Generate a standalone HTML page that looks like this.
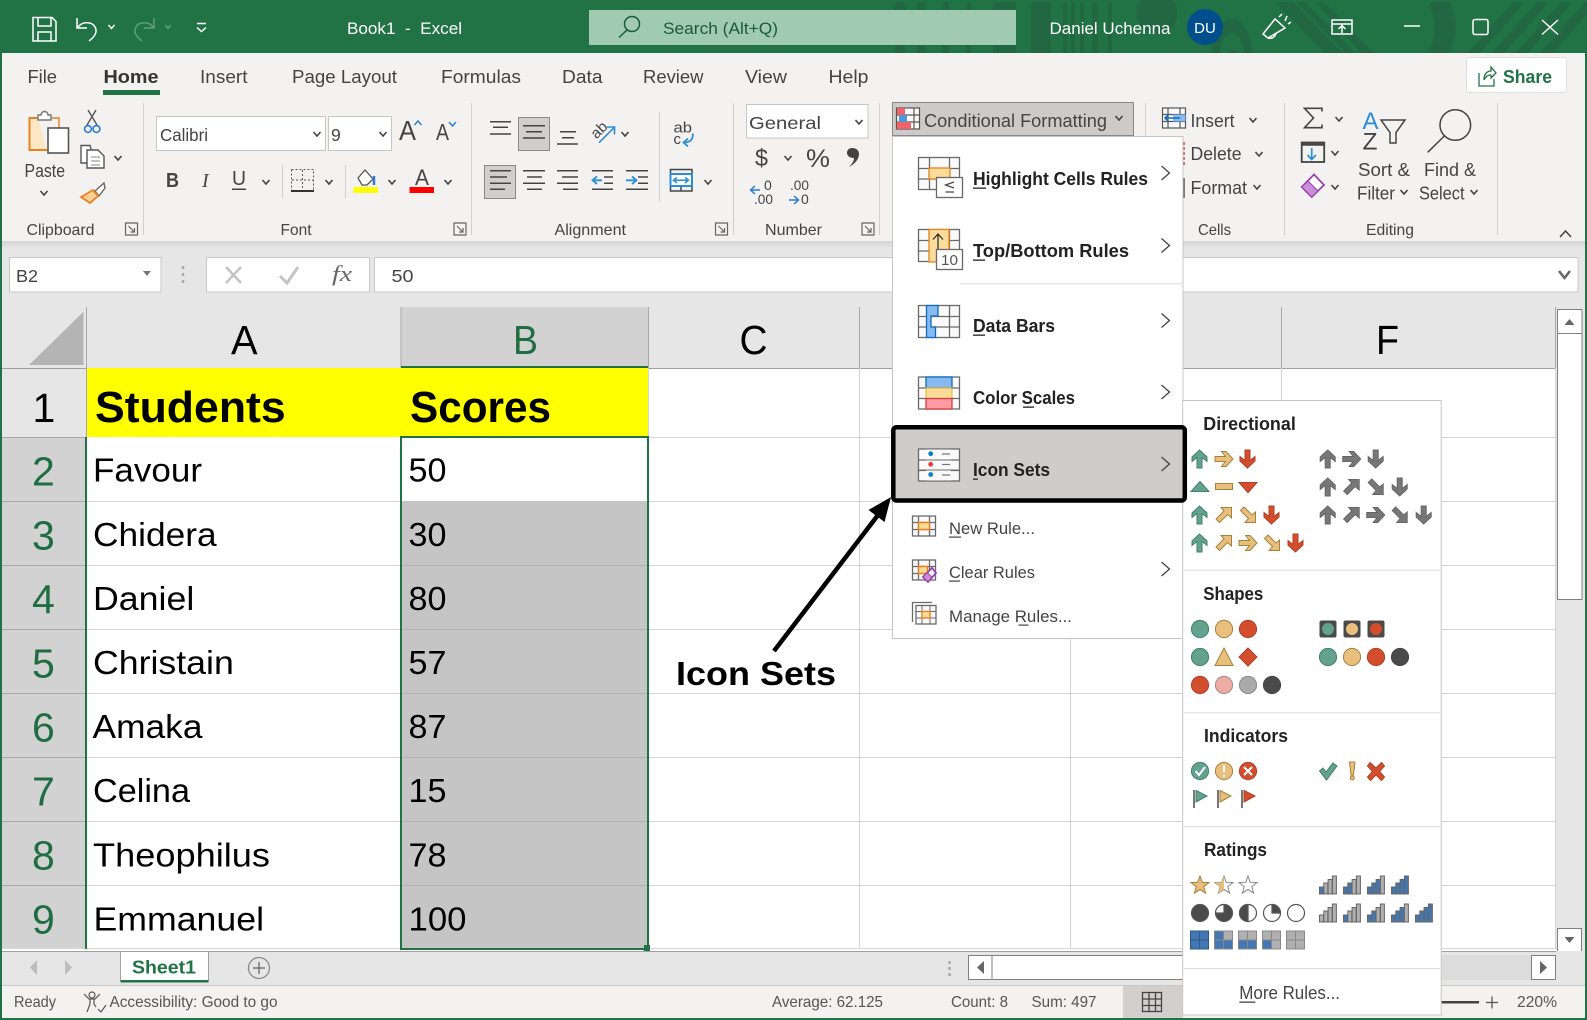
<!DOCTYPE html>
<html lang="en"><head><meta charset="utf-8"><title>Book1 - Excel</title>
<style>
html,body{margin:0;padding:0;background:#fff;width:1587px;height:1020px;overflow:hidden}
svg{display:block}
text{font-family:"Liberation Sans",sans-serif;fill:#444;font-size:18px}
.w{fill:#fff}
.g{font-size:16px}
.b{font-weight:700;fill:#222}
.c{font-size:33px;fill:#000}
.h{font-size:44px;font-weight:700;fill:#000}
.n{font-size:41px;fill:#1f6e43}
.k{font-size:41px;fill:#000}
.s{font-size:16px;fill:#555}
</style></head><body>
<svg xmlns="http://www.w3.org/2000/svg" width="1587" height="1020" viewBox="0 0 1587 1020">
<defs>
<linearGradient id="sh" x1="0" y1="0" x2="0" y2="1"><stop offset="0" stop-color="#d4d4d4"/><stop offset="1" stop-color="#e6e6e6"/></linearGradient>
<path id="ch" d="M-3.500-2 0 2 3.500-2" fill="none" stroke="#444" stroke-width="1.600"/>
<path id="mc" d="M-4-7 4 0-4 7" fill="none" stroke="#444" stroke-width="1.300"/>
<path id="launch" d="M-6-6H6V6H-6ZM-3-3 3 3M3-1V3H-1" fill="none" stroke="#666" stroke-width="1.200"/>
<path id="up" d="M0-9 7.500-2V2.500L2.500-1.500V9H-2.500V-1.500L-7.500 2.500V-2Z" stroke-width="1"/>
<path id="dg" d="M-3-7.500H7.500V3L3.500-.5-4.500 7.500-8 4 0-4Z" stroke-width="1"/>
<g id="gridM" fill="none" stroke="#6a6a6a" stroke-width="1.300"><rect x="0" y="0" width="41" height="32" fill="#fafafa"/><path d="M11 0V32M31 0V32M0 11H41M0 21.500H41"/></g>
<g id="gridS" fill="none" stroke="#6a6a6a" stroke-width="1.300"><rect x="0" y="0" width="23" height="20" fill="#fafafa"/><path d="M6 0V20M17 0V20M0 6.500H23M0 13.500H23"/></g>
<path id="star" d="M0-9.500 2.290-3.160 9.030-2.940 3.710 1.200 5.580 7.690 0 3.900-5.580 7.690-3.710 1.200-9.030-2.940-2.290-3.160Z"/>
</defs>

<rect width="1587" height="1020" fill="#fff"/>
<!-- title bar -->
<rect width="1587" height="53" fill="#217346"/>
<g fill="#206742">
<rect x="895" y="2" width="10" height="51"/><rect x="917" y="2" width="9" height="51"/><rect x="942" y="2" width="7" height="51"/><rect x="966" y="2" width="5" height="51"/><rect x="993" y="2" width="23" height="51"/>
<rect x="1031" y="2" width="20" height="51"/><rect x="1063" y="2" width="4" height="51"/><rect x="1071" y="2" width="4" height="51"/><rect x="1080" y="2" width="4" height="51"/><rect x="1092" y="2" width="6" height="51"/><rect x="1108" y="2" width="4" height="51"/>
<circle cx="1157" cy="13" r="20.500"/>
<path d="M1212 53a20 34 0 0 1 40 0h-8a12 20 0 0 0-24 0ZM1228 53a6 8 0 0 1 9 0Z"/>
<path d="M1275 2h18l50 51h-18ZM1296 2h9l50 51h-9ZM1315 2h9l50 51h-13ZM1429 2h20c9 15 9 35 0 51h-20c7-17 7-33 0-51ZM1468 53l45-51h12l-45 51ZM1492 53l45-51h12l-45 51ZM1516 53l45-51h12l-45 51ZM1540 53l45-51h2v12l-33 39Z"/>
</g>
<g fill="none" stroke="#fff" stroke-width="1.500">
<path d="M33 17.500H52L56 21.500V41H33ZM38 18V26H51V18M38 41V32H51V41"/>
<path d="M77 18V28H87M78 27C84 20 95 22 96 30 96.500 34 93 38 89 41"/>
<path d="M108.500 25 111.500 28.500 114.500 25"/>
<path d="M197 23.500H206M197 27.500 201.500 31.500 206 27.500"/>
<g stroke="#5f9e7f"><path d="M154 18V28H144M153 27C147 20 136 22 135 30 134.500 34 138 38 142 41"/><path d="M165 25 168 28.500 171 25"/></g>
</g>
<text class="w" x="347" y="34" style="font-size:17px" textLength="115" lengthAdjust="spacingAndGlyphs" xml:space="preserve">Book1  -  Excel</text>
<rect x="589" y="10" width="427" height="35" fill="#a0cbb1"/>
<g fill="none" stroke="#1c5a38" stroke-width="1.500"><circle cx="632" cy="24" r="7.500"/><path d="M627 30 619 37.500"/></g>
<text x="663" y="34" style="font-size:17px;fill:#1c5a38" textLength="115" lengthAdjust="spacingAndGlyphs">Search (Alt+Q)</text>
<text class="w" x="1049.500" y="34" style="font-size:17px" textLength="121" lengthAdjust="spacingAndGlyphs">Daniel Uchenna</text>
<ellipse cx="1205" cy="27" rx="18" ry="18" fill="#004e8c"/>
<text class="w" x="1205" y="33" text-anchor="middle" style="font-size:15px">DU</text>
<g fill="none" stroke="#fff" stroke-width="1.500">
<path d="M1263 34 1275 19 1285 28 1268 38ZM1268 38C1271 39 1275 38 1276 33M1279 17 1282 14M1285 21 1287 16M1288 24 1291 22"/>
<path d="M1332 20H1352V34H1332ZM1332 24H1352M1342 33V26M1338.500 29 1342 25.500 1345.500 29"/>
<path d="M1404 26H1420"/><rect x="1473" y="19.500" width="15" height="15" rx="2"/><path d="M1542 20 1558 34.500M1558 20 1542 34.500"/>
</g>

<!-- ribbon -->
<rect y="53" width="1587" height="188" fill="#f3f2f1"/>
<text x="27.500" y="83" textLength="29.500" lengthAdjust="spacingAndGlyphs">File</text>
<text x="103.500" y="83" textLength="55" lengthAdjust="spacingAndGlyphs" style="font-weight:700;fill:#333">Home</text>
<rect x="103" y="90" width="57" height="5" fill="#217346"/>
<text x="200" y="83" textLength="47.500" lengthAdjust="spacingAndGlyphs">Insert</text>
<text x="292" y="83" textLength="105" lengthAdjust="spacingAndGlyphs">Page Layout</text>
<text x="441" y="83" textLength="80" lengthAdjust="spacingAndGlyphs">Formulas</text>
<text x="562" y="83" textLength="40.500" lengthAdjust="spacingAndGlyphs">Data</text>
<text x="643" y="83" textLength="60.500" lengthAdjust="spacingAndGlyphs">Review</text>
<text x="745" y="83" textLength="42" lengthAdjust="spacingAndGlyphs">View</text>
<text x="828.500" y="83" textLength="40" lengthAdjust="spacingAndGlyphs">Help</text>
<rect x="1466.500" y="57.500" width="100" height="35" rx="3" fill="#fff" stroke="#e1dfdd"/>
<path d="M1479 73V86H1494V79M1484 80C1484 73 1488 71 1491 71V67L1496 73 1491 78V75C1488 75 1486 76 1484 80Z" fill="none" stroke="#217346" stroke-width="1.300"/>
<text x="1503" y="83" textLength="49" lengthAdjust="spacingAndGlyphs" style="font-weight:700;fill:#217346">Share</text>

<path d="M143.500 103V235M471.500 103V235M733.500 103V235M879.500 103V235M1145.500 103V235M1284.500 103V235M1497.500 103V235" stroke="#d2d0ce" stroke-width="1"/>

<!-- clipboard -->
<g fill="none" stroke-width="1.400">
<path d="M38 118H29.500V150H47" stroke="#e8821e" stroke-width="2" fill="#fce7c4"/>
<path d="M38 118H59V128" stroke="#e8821e"/>
<path d="M38 120V115H41A3.500 3.500 0 0 1 48 115H51V120Z" fill="#fff" stroke="#777"/>
<rect x="48" y="128" width="20.500" height="25" fill="#fff" stroke="#555" stroke-width="1.600"/>
<path d="M88 110 97 125M96 110 87 125" stroke="#555"/>
<circle cx="88" cy="129" r="3.400" stroke="#2b7cd3" stroke-width="1.600"/><circle cx="96.500" cy="129" r="3.400" stroke="#2b7cd3" stroke-width="1.600"/>
<path d="M81 145.500H90L91 149V163H81Z" stroke="#555" fill="#fff"/>
<path d="M87 150H98L104 156V168H87Z" stroke="#555" fill="#fff"/><path d="M91 157H100M91 161H100M91 165H100" stroke="#888" stroke-width="1"/>
<path d="M104 183 95 191 99 196 105 188Z" stroke="#666" fill="#fff"/>
<path d="M93 190 81 197 90 203 98 196Z" stroke="#e8821e" fill="#f9cf95" stroke-width="1.800"/>
</g>
<text x="24.500" y="177" textLength="40.500" lengthAdjust="spacingAndGlyphs">Paste</text>
<use href="#ch" x="44" y="193"/><use href="#ch" x="118" y="158"/>
<text class="g" x="26.500" y="235" textLength="68" lengthAdjust="spacingAndGlyphs">Clipboard</text>
<use href="#launch" x="131.500" y="229"/>

<!-- font -->
<rect x="156.500" y="116.500" width="169" height="34" fill="#fff" stroke="#c8c6c4"/>
<text x="160" y="141" style="font-size:17.500px" textLength="48" lengthAdjust="spacingAndGlyphs">Calibri</text>
<use href="#ch" x="317" y="134"/>
<rect x="328.500" y="116.500" width="63" height="34" fill="#fff" stroke="#c8c6c4"/>
<text x="331" y="141" style="font-size:17.500px">9</text><use href="#ch" x="383" y="134"/>
<text x="399" y="140" style="font-size:28px" textLength="17" lengthAdjust="spacingAndGlyphs">A</text>
<path d="M414.500 125 418 121 421.500 125" fill="none" stroke="#2b7cd3" stroke-width="1.400"/>
<text x="436" y="140" style="font-size:23px" textLength="13" lengthAdjust="spacingAndGlyphs">A</text>
<path d="M449 122 452.500 126 456 122" fill="none" stroke="#2b7cd3" stroke-width="1.400"/>
<text x="166" y="187" style="font-size:20px;font-weight:700" textLength="13" lengthAdjust="spacingAndGlyphs">B</text>
<text x="202" y="187" style="font-size:20px;font-style:italic;font-family:'Liberation Serif',serif">I</text>
<text x="232" y="185" style="font-size:20px" textLength="14" lengthAdjust="spacingAndGlyphs">U</text>
<rect x="232" y="188.500" width="14" height="1.500" fill="#444"/>
<use href="#ch" x="266" y="182"/>
<path d="M282.500 165V198M345.500 165V198" stroke="#d2d0ce"/>
<path d="M291.500 169.500H313.500V190M291.500 169.500V190M302.500 170V190M292 180H313" fill="none" stroke="#555" stroke-dasharray="2 2"/>
<rect x="291" y="190" width="23" height="2" fill="#333"/>
<use href="#ch" x="329" y="182"/>
<path d="M358 178 365 170 373 179 367 185 362 185Z" fill="#fff" stroke="#555" stroke-width="1.300"/>
<path d="M374 176V185" stroke="#2b7cd3" stroke-width="2.500"/>
<rect x="353.500" y="187" width="24.500" height="6" fill="#ff0"/>
<use href="#ch" x="392" y="182"/>
<text x="415" y="185" style="font-size:22px" textLength="14" lengthAdjust="spacingAndGlyphs">A</text>
<rect x="409.500" y="187" width="24.500" height="6" fill="#f00"/>
<use href="#ch" x="448" y="182"/>
<text class="g" x="280.500" y="235" textLength="31" lengthAdjust="spacingAndGlyphs">Font</text>
<use href="#launch" x="460" y="229"/>

<!-- alignment -->
<rect x="518.500" y="117.500" width="31" height="33" fill="#d0cfce" stroke="#8a8886"/>
<rect x="484.500" y="165.500" width="31" height="33" fill="#d0cfce" stroke="#8a8886"/>
<path d="M490 121.700H511M493 127.300H508M490 134H511M523 125.700H545M526 131.700H542M523 138H545M560 131.700H576M562 137.700H574M557 144H578" stroke="#444" stroke-width="1.500"/>
<path d="M490 170.700H511M490 177H507M490 183.300H511M490 189.300H505M523 170.700H545M527 177H542M523 183.300H545M527 189.300H542M557 170.700H578M562 177H578M557 183.300H578M563 189.300H578M592 170.700H613M604 177H613M604 183.300H613M592 189.300H613M626 170.700H648M638 177H648M638 183.300H648M626 189.300H648" stroke="#444" stroke-width="1.500"/>
<path d="M602 180.300H593M597 176.500 592.500 180.300 597 184M626 180.300H636M632 176.500 636.500 180.300 632 184" fill="none" stroke="#2b8fd8" stroke-width="1.800"/>
<text x="590.500" y="135" style="font-size:15px" transform="rotate(-45 599 130)" textLength="17" lengthAdjust="spacingAndGlyphs">ab</text>
<path d="M599 142.700 614 127.700M607 127H614.500V134.500" fill="none" stroke="#2b8fd8" stroke-width="1.600"/>
<use href="#ch" x="625" y="134"/>
<path d="M659.500 112V202" stroke="#d2d0ce"/>
<text x="673.500" y="132.300" style="font-size:15px" textLength="18.500" lengthAdjust="spacingAndGlyphs">ab</text>
<text x="673.500" y="144" style="font-size:15px">c</text>
<path d="M693 133.500C693 140 690 142.500 684 142.500M688 138.500 683.500 142.500 688 146.500" fill="none" stroke="#2b8fd8" stroke-width="1.800"/>
<g fill="none" stroke="#444" stroke-width="1.500"><path d="M670.500 174V169.500H692V174M670.500 186V191H692V186M681 186V191"/></g>
<rect x="670.500" y="174" width="21.500" height="12" fill="#fff" stroke="#2b8fd8" stroke-width="2"/>
<path d="M674 180.300H688M677 177.500 673.500 180.300 677 183M685 177.500 688.500 180.300 685 183" fill="none" stroke="#2b8fd8" stroke-width="1.500"/>
<use href="#ch" x="708" y="182"/>
<text class="g" x="554.500" y="235" textLength="71.500" lengthAdjust="spacingAndGlyphs">Alignment</text>
<use href="#launch" x="721.500" y="229"/>

<!-- number -->
<rect x="746.500" y="104.500" width="121.500" height="33.500" fill="#fff" stroke="#c8c6c4"/>
<text x="749" y="129" style="font-size:17.500px" textLength="72" lengthAdjust="spacingAndGlyphs">General</text>
<use href="#ch" x="859" y="122"/>
<text x="755" y="166" style="font-size:24px" textLength="13" lengthAdjust="spacingAndGlyphs">$</text>
<use href="#ch" x="788" y="158"/>
<text x="806" y="167" style="font-size:25px" textLength="24" lengthAdjust="spacingAndGlyphs">%</text>
<path d="M852 148C856 148 859 150 859 154 859 159 855 164 849 167 852 164 854 161 854 158 850 158 847 156 847 153 847 150 849 148 852 148Z" fill="#444"/>
<path d="M760 190H751M755 186 750.500 190 755 194" fill="none" stroke="#2b7cd3" stroke-width="1.500"/>
<text x="764" y="190" style="font-size:14px">0</text>
<text x="754" y="204" style="font-size:14px" textLength="19" lengthAdjust="spacingAndGlyphs">.00</text>
<text x="790" y="190" style="font-size:14px" textLength="19" lengthAdjust="spacingAndGlyphs">.00</text>
<path d="M789 200H798M794 196 798.500 200 794 204" fill="none" stroke="#2b7cd3" stroke-width="1.500"/>
<text x="801" y="204" style="font-size:14px">0</text>
<text class="g" x="765" y="235" textLength="57" lengthAdjust="spacingAndGlyphs">Number</text>
<use href="#launch" x="868" y="229"/>

<!-- conditional formatting btn -->
<rect x="892.500" y="102.500" width="241" height="33" fill="#cdcbc9" stroke="#8a8886"/>
<g fill="none" stroke="#555" stroke-width="1.200"><rect x="896.500" y="108" width="23" height="21" fill="#fafafa"/><path d="M902 108V129M914 108V129M896.500 115H919.500M896.500 122H919.500"/></g>
<rect x="897" y="108" width="8" height="7" fill="#f0616a"/><rect x="899" y="115" width="8" height="7" fill="#4b97d8"/><rect x="897" y="122" width="14" height="7" fill="#f0616a"/>
<text x="924" y="127" textLength="183" lengthAdjust="spacingAndGlyphs">Conditional Formatting</text>
<use href="#ch" x="1119" y="118"/>

<!-- cells -->
<g fill="none" stroke="#555" stroke-width="1.200"><rect x="1162.500" y="108" width="23" height="20" fill="#fafafa"/><path d="M1168 108V128M1180 108V128M1162.500 114.500H1185.500M1162.500 121.500H1185.500"/></g>
<rect x="1173" y="114.500" width="12.500" height="7" fill="#86baf0"/>
<path d="M1180 118H1165M1169 114 1165 118 1169 122" fill="none" stroke="#0f6cbd" stroke-width="1.500"/>
<text x="1190.500" y="127" textLength="44" lengthAdjust="spacingAndGlyphs">Insert</text><use href="#ch" x="1253" y="120"/>
<text x="1190.500" y="160" textLength="51" lengthAdjust="spacingAndGlyphs">Delete</text><use href="#ch" x="1259" y="154"/>
<text x="1190.500" y="194" textLength="56.500" lengthAdjust="spacingAndGlyphs">Format</text><use href="#ch" x="1257" y="187"/>
<path d="M1184 142V166" stroke="#e83b3b" stroke-dasharray="3 2" stroke-width="1.500"/>
<path d="M1184 178V198" stroke="#555" stroke-width="1.500"/>
<text class="g" x="1198" y="235" textLength="33" lengthAdjust="spacingAndGlyphs">Cells</text>

<!-- editing -->
<path d="M1322 111.500V108.300H1304.500L1313.500 118 1304.500 127.700H1322V124.500" fill="none" stroke="#444" stroke-width="1.600"/>
<use href="#ch" x="1339" y="119"/>
<rect x="1301.700" y="142.500" width="22.500" height="19.500" fill="none" stroke="#444" stroke-width="1.800"/><path d="M1301 144.500H1325" stroke="#444" stroke-width="2.500"/>
<path d="M1311.700 148V159M1307.500 155 1311.700 159.500 1316 155" fill="none" stroke="#2b8fd8" stroke-width="1.700"/>
<use href="#ch" x="1335" y="153"/>
<path d="M1314 174.500 1324 185 1311.700 197 1301.700 187Z" fill="#fff" stroke="#9a3dad" stroke-width="1.700"/><path d="M1308 181 1318 191 1311.700 197 1301.700 187Z" fill="#c98fd6" stroke="#9a3dad" stroke-width="1"/>
<use href="#ch" x="1335" y="187"/>
<text x="1362.500" y="129" style="font-size:24px;fill:#2b8fd8" textLength="16" lengthAdjust="spacingAndGlyphs">A</text>
<text x="1362.500" y="149.300" style="font-size:24px" textLength="15" lengthAdjust="spacingAndGlyphs">Z</text>
<path d="M1381 120H1405L1396 132.500V143H1390V132.500Z" fill="none" stroke="#444" stroke-width="1.500"/>
<circle cx="1455.300" cy="125" r="15.300" fill="none" stroke="#444" stroke-width="1.500"/><path d="M1444.300 136 1427.700 152.300" stroke="#444" stroke-width="1.500"/>
<text x="1358" y="176" textLength="52" lengthAdjust="spacingAndGlyphs">Sort &amp;</text>
<text x="1357" y="199.500" textLength="38" lengthAdjust="spacingAndGlyphs">Filter</text><use href="#ch" x="1404" y="192"/>
<text x="1424" y="176" textLength="52" lengthAdjust="spacingAndGlyphs">Find &amp;</text>
<text x="1419" y="199.500" textLength="45.500" lengthAdjust="spacingAndGlyphs">Select</text><use href="#ch" x="1474" y="192"/>
<text class="g" x="1366" y="235" textLength="48" lengthAdjust="spacingAndGlyphs">Editing</text>
<path d="M1560 237 1565.500 231 1571 237" fill="none" stroke="#444" stroke-width="1.500"/>

<!-- formula area -->
<rect y="241" width="1587" height="66" fill="#e6e6e6"/>
<rect y="241" width="1587" height="7" fill="url(#sh)"/>
<rect x="9.500" y="257.500" width="151.500" height="34.500" fill="#fff" stroke="#c8c8c8"/>
<text x="16" y="282" style="font-size:17.500px" textLength="22" lengthAdjust="spacingAndGlyphs">B2</text>
<path d="M143 271H151L147 276Z" fill="#777"/>
<path d="M183 266V269M183 273V276M183 280V283" stroke="#aaa" stroke-width="2.500"/>
<rect x="206.500" y="257.500" width="163" height="34.500" fill="#fff" stroke="#c8c8c8"/>
<path d="M226 267 241 283M241 267 226 283" stroke="#c4c4c4" stroke-width="2.500"/>
<path d="M280 276 287 283 298 267" fill="none" stroke="#c4c4c4" stroke-width="3"/>
<text x="332" y="281" style="font-size:22px;font-style:italic;font-family:'Liberation Serif',serif;fill:#666" textLength="20" lengthAdjust="spacingAndGlyphs">fx</text>
<rect x="374.500" y="257.500" width="1203.500" height="34.500" fill="#fff" stroke="#c8c8c8"/>
<text x="391.500" y="282" style="font-size:17.500px" textLength="22" lengthAdjust="spacingAndGlyphs">50</text>
<path d="M1559 271 1564.500 278 1570 271" fill="none" stroke="#666" stroke-width="2.500"/>

<!-- headers -->
<rect x="2" y="307" width="1555" height="61" fill="#e6e6e6"/>
<rect x="2" y="368" width="84" height="581" fill="#e6e6e6"/>
<rect x="2" y="437" width="84" height="512" fill="#d2d2d2"/>
<rect x="401" y="307" width="247" height="61" fill="#d2d2d2"/>
<path d="M29 365 83.500 311.700V365Z" fill="#b4b4b4"/>
<rect x="87" y="368" width="1470" height="581" fill="#fff"/>
<path d="M86.500 307V368M401 307V368M648.500 307V368M859.500 307V368M1070.500 307V368M1281.500 307V368M1555.500 307V368" stroke="#a8a8a8"/>
<path d="M2 368.500H1556" stroke="#9f9f9f"/>
<rect x="401" y="366" width="247" height="2" fill="#217346"/>
<path d="M2 437.500H86M2 501.500H86M2 565.500H86M2 629.500H86M2 693.500H86M2 757.500H86M2 821.500H86M2 885.500H86M86.500 368V437" stroke="#a8a8a8"/>
<text class="k" x="231" y="354" textLength="26.600" lengthAdjust="spacingAndGlyphs">A</text>
<text class="n" x="513" y="354" textLength="25" lengthAdjust="spacingAndGlyphs">B</text>
<text class="k" x="739.500" y="354" textLength="28" lengthAdjust="spacingAndGlyphs">C</text>
<text class="k" x="1376" y="354" textLength="23" lengthAdjust="spacingAndGlyphs">F</text>
<text class="k" x="32.500" y="422">1</text>
<text class="n" x="32" y="485.700">2</text>
<text class="n" x="32" y="549.700">3</text>
<text class="n" x="32" y="613.700">4</text>
<text class="n" x="32" y="677.700">5</text>
<text class="n" x="32" y="741.700">6</text>
<text class="n" x="32" y="805.700">7</text>
<text class="n" x="32" y="869.700">8</text>
<text class="n" x="32" y="933.700">9</text>

<!-- grid -->
<path d="M648.500 368V949M859.500 368V949M1070.500 368V949M1281.500 368V949M1555.500 368V949M87 501.500H401M87 565.500H401M87 629.500H401M87 693.500H401M87 757.500H401M87 821.500H401M87 885.500H401M648 437.500H1556M648 501.500H1556M648 565.500H1556M648 629.500H1556M648 693.500H1556M648 757.500H1556M648 821.500H1556M648 885.500H1556M2 948.500H1556" stroke="#d4d4d4"/>
<rect x="87" y="368" width="561" height="69" fill="#ff0"/>
<rect x="85" y="437" width="2" height="512" fill="#217346"/>
<rect x="402" y="501" width="245" height="447" fill="#c5c5c5"/>
<path d="M402 565.500H647M402 629.500H647M402 693.500H647M402 757.500H647M402 821.500H647M402 885.500H647" stroke="#b2b2b2"/>
<rect x="401" y="437" width="247" height="512" fill="none" stroke="#217346" stroke-width="2"/>
<rect x="644" y="945" width="6" height="6" fill="#217346"/>
<text class="h" x="95" y="422" textLength="190.700" lengthAdjust="spacingAndGlyphs">Students</text>
<text class="h" x="410" y="422" textLength="141" lengthAdjust="spacingAndGlyphs">Scores</text>
<text class="c" x="93" y="481.700" textLength="109" lengthAdjust="spacingAndGlyphs">Favour</text>
<text class="c" x="93" y="545.800" textLength="123.600" lengthAdjust="spacingAndGlyphs">Chidera</text>
<text class="c" x="93" y="609.900" textLength="101.300" lengthAdjust="spacingAndGlyphs">Daniel</text>
<text class="c" x="93" y="674" textLength="140.800" lengthAdjust="spacingAndGlyphs">Christain</text>
<text class="c" x="92.500" y="738.100" textLength="110" lengthAdjust="spacingAndGlyphs">Amaka</text>
<text class="c" x="93" y="802.200" textLength="97" lengthAdjust="spacingAndGlyphs">Celina</text>
<text class="c" x="93" y="866.300" textLength="177" lengthAdjust="spacingAndGlyphs">Theophilus</text>
<text class="c" x="93.500" y="930.400" textLength="170.500" lengthAdjust="spacingAndGlyphs">Emmanuel</text>
<text class="c" x="408.500" y="481.700" textLength="38" lengthAdjust="spacingAndGlyphs">50</text>
<text class="c" x="408.500" y="545.800" textLength="38" lengthAdjust="spacingAndGlyphs">30</text>
<text class="c" x="408.500" y="609.900" textLength="38" lengthAdjust="spacingAndGlyphs">80</text>
<text class="c" x="408.500" y="674" textLength="38" lengthAdjust="spacingAndGlyphs">57</text>
<text class="c" x="408.500" y="738.100" textLength="38" lengthAdjust="spacingAndGlyphs">87</text>
<text class="c" x="408.500" y="802.200" textLength="38" lengthAdjust="spacingAndGlyphs">15</text>
<text class="c" x="408.500" y="866.300" textLength="38" lengthAdjust="spacingAndGlyphs">78</text>
<text class="c" x="408.500" y="930.400" textLength="58" lengthAdjust="spacingAndGlyphs">100</text>

<!-- vertical scrollbar -->
<rect x="1556" y="307" width="29" height="644" fill="#e6e6e6"/>
<rect x="1557.500" y="309.500" width="24.500" height="24" fill="#fff" stroke="#808080"/>
<path d="M1564.500 325 1569.500 319 1574.500 325Z" fill="#666"/>
<rect x="1557.500" y="333.500" width="24.500" height="266" fill="#fff" stroke="#808080"/>
<rect x="1557.500" y="928.500" width="24" height="23.500" fill="#fff" stroke="#808080"/>
<path d="M1564.500 937 1569.500 943 1574.500 937Z" fill="#666"/>

<!-- sheet tabs -->
<rect x="2" y="951" width="1583" height="34" fill="#e6e6e6"/>
<path d="M2 951.500H1556" stroke="#a0a0a0"/>
<path d="M37 960 30 967.500 37 975ZM65 960 72 967.500 65 975Z" fill="#bdbdbd"/>
<path d="M120.500 981V951.500H208.500V981" fill="#fff" stroke="#a0a0a0"/>
<rect x="120.500" y="980" width="88" height="2.500" fill="#217346"/>
<text x="132" y="973.500" style="font-size:18px;font-weight:700;fill:#217346" textLength="64" lengthAdjust="spacingAndGlyphs">Sheet1</text>
<circle cx="259" cy="968" r="10.500" fill="none" stroke="#8a8a8a" stroke-width="1.300"/>
<path d="M253 968H265M259 962V974" stroke="#777" stroke-width="1.500"/>
<path d="M949.500 961V964M949.500 967V970M949.500 973V976" stroke="#aaa" stroke-width="2.500"/>
<rect x="968.500" y="955.500" width="23.500" height="24" fill="#fff" stroke="#808080"/>
<path d="M984 961 977 967.500 984 974Z" fill="#666"/>
<rect x="992" y="955.500" width="200" height="24" fill="#fff" stroke="#808080"/>
<rect x="1441" y="955" width="91" height="25" fill="#dcdcdc"/>
<rect x="1531.500" y="955.500" width="24" height="24" fill="#fff" stroke="#808080"/>
<path d="M1540 961 1547 967.500 1540 974Z" fill="#666"/>

<!-- status bar -->
<rect x="2" y="985" width="1583" height="33" fill="#f3f2f1"/>
<path d="M2 985.500H1585" stroke="#c8c8c8"/>
<text class="s" x="14" y="1007" textLength="42" lengthAdjust="spacingAndGlyphs">Ready</text>
<g fill="none" stroke="#555" stroke-width="1.200"><circle cx="92" cy="995" r="3"/><path d="M84 994 89 999H95L100 994M90 999V1004L87 1012M94 999V1004L96 1007"/><path d="M98 1009 101 1012 106 1005" stroke="#555"/></g>
<text class="s" x="109.500" y="1007" textLength="168" lengthAdjust="spacingAndGlyphs">Accessibility: Good to go</text>
<text class="s" x="772" y="1007" textLength="111" lengthAdjust="spacingAndGlyphs">Average: 62.125</text>
<text class="s" x="951" y="1007" textLength="57" lengthAdjust="spacingAndGlyphs">Count: 8</text>
<text class="s" x="1031.500" y="1007" textLength="65" lengthAdjust="spacingAndGlyphs">Sum: 497</text>
<rect x="1123" y="986" width="60" height="32" fill="#d2d0ce"/>
<g fill="none" stroke="#444" stroke-width="1.300"><rect x="1142.500" y="992.500" width="19" height="19"/><path d="M1149 992.500V1011.500M1155.500 992.500V1011.500M1142.500 999H1161.500M1142.500 1005.500H1161.500"/></g>
<rect x="1441" y="1001" width="38" height="2.500" fill="#444"/>
<path d="M1486 1002.500H1498M1492 996.500V1008.500" stroke="#555" stroke-width="1.300"/>
<text class="s" x="1517" y="1007" textLength="40" lengthAdjust="spacingAndGlyphs">220%</text>

<!-- frame -->
<rect x="0" y="53" width="2" height="967" fill="#217346"/>
<rect x="1585" y="53" width="2" height="967" fill="#217346"/>
<rect x="0" y="1018" width="1587" height="2" fill="#217346"/>

<!-- dropdown menu -->
<rect x="892.500" y="136.500" width="290.500" height="502" fill="#fff" stroke="#c8c6c4"/>
<use href="#gridM" x="918.500" y="157.500"/>
<rect x="929" y="168" width="21" height="11" fill="#fbdc9a" stroke="#e8821e" stroke-width="1.300"/>
<rect x="936.500" y="177.500" width="26" height="20" fill="#fff" stroke="#6a6a6a" stroke-width="1.300"/>
<path d="M954 182 945.500 185 954 188M945.500 192H954" fill="none" stroke="#444" stroke-width="1.200"/>
<text class="b" x="973" y="185" textLength="175" lengthAdjust="spacingAndGlyphs">Highlight Cells Rules</text>
<rect x="973" y="187.500" width="13" height="1.300" fill="#222"/>
<use href="#mc" x="1165.500" y="173"/>

<use href="#gridM" x="918.500" y="229.500"/>
<rect x="929" y="229.500" width="20" height="32.500" fill="#fbdc9a" stroke="#e8821e" stroke-width="1.300"/>
<path d="M938 250V234M933 239.500 938 234 943 239.500" fill="none" stroke="#333" stroke-width="1.300"/>
<rect x="936.500" y="249.500" width="26" height="20" fill="#fff" stroke="#6a6a6a" stroke-width="1.300"/>
<text x="941" y="265" style="font-size:15px;fill:#555" textLength="17" lengthAdjust="spacingAndGlyphs">10</text>
<text class="b" x="973" y="257" textLength="156" lengthAdjust="spacingAndGlyphs">Top/Bottom Rules</text>
<rect x="973" y="259.500" width="12" height="1.300" fill="#222"/>
<use href="#mc" x="1165.500" y="245.500"/>
<path d="M960 283.700H1182" stroke="#ddd"/>

<use href="#gridM" x="918.500" y="305.500"/>
<path d="M926.500 305.500H938V316H931V327H935.500V337.500H926.500Z" fill="#86baf0" stroke="#0f6cbd" stroke-width="1.300"/>
<text class="b" x="973" y="332" textLength="82" lengthAdjust="spacingAndGlyphs">Data Bars</text>
<rect x="973" y="334.500" width="12" height="1.300" fill="#222"/>
<use href="#mc" x="1165.500" y="320.500"/>

<use href="#gridM" x="918.500" y="377"/>
<rect x="926" y="377" width="26" height="11" fill="#86baf0" stroke="#0f6cbd" stroke-width="1.300"/>
<rect x="926" y="388" width="26" height="10.500" fill="#f9dc9a" stroke="#e8b22e" stroke-width="1"/>
<rect x="926" y="398.500" width="26" height="10.500" fill="#ff9aa2" stroke="#d83b3b" stroke-width="1.300"/>
<text class="b" x="973" y="404" textLength="102" lengthAdjust="spacingAndGlyphs">Color Scales</text>
<rect x="1023" y="406.500" width="11" height="1.300" fill="#222"/>
<use href="#mc" x="1165.500" y="392"/>

<use href="#gridS" x="912.500" y="516"/><rect x="918.500" y="522.500" width="11" height="7" fill="#fbdc9a" stroke="#e8821e" stroke-width="1.500"/>
<text x="949" y="534" style="font-size:17px" textLength="86" lengthAdjust="spacingAndGlyphs">New Rule...</text>
<rect x="949" y="536.500" width="12" height="1.200" fill="#444"/>
<use href="#gridS" x="912.500" y="560"/><rect x="918.500" y="566.500" width="9" height="7" fill="#fbdc9a" stroke="#e8821e" stroke-width="1.500"/>
<path d="M923 577 932 568 936 573 928 582Z" fill="#fff" stroke="#9a3dad" stroke-width="1.800"/><path d="M923 577 927 572.500 932 577 928 582Z" fill="#c98fd6" stroke="#9a3dad" stroke-width="1"/>
<text x="949" y="578" style="font-size:17px" textLength="86" lengthAdjust="spacingAndGlyphs">Clear Rules</text>
<rect x="949" y="580.500" width="11" height="1.200" fill="#444"/>
<use href="#mc" x="1165.500" y="569"/>
<path d="M912.500 622V602.500H932" fill="none" stroke="#6a6a6a" stroke-width="1.300"/>
<rect x="916" y="605.500" width="20" height="18.500" fill="#fafafa" stroke="#6a6a6a" stroke-width="1.300"/><path d="M922 605.500V624M930 605.500V624M916 611.500H936M916 618H936" stroke="#6a6a6a"/><rect x="922" y="611.500" width="8" height="6.500" fill="#fbdc9a" stroke="#e8821e" stroke-width="1.400"/>
<text x="949" y="622" style="font-size:17px" textLength="123" lengthAdjust="spacingAndGlyphs">Manage Rules...</text>
<rect x="1018.500" y="624.500" width="10" height="1.200" fill="#444"/>

<!-- annotation -->
<path d="M774 651 878 515" stroke="#000" stroke-width="4.500"/>
<path d="M891 497 884.500 522 868.500 510Z" fill="#000"/>
<text x="676" y="685" style="font-size:33px;font-weight:700;fill:#000" textLength="160" lengthAdjust="spacingAndGlyphs">Icon Sets</text>

<!-- submenu -->
<rect x="1182.700" y="400.500" width="258.500" height="614.500" fill="#fff" stroke="#c8c6c4"/>
<text class="b" x="1203.300" y="430" textLength="92.500" lengthAdjust="spacingAndGlyphs">Directional</text>
<text class="b" x="1203.300" y="600" textLength="60" lengthAdjust="spacingAndGlyphs">Shapes</text>
<text class="b" x="1204" y="742" textLength="84" lengthAdjust="spacingAndGlyphs">Indicators</text>
<text class="b" x="1204" y="856" textLength="63" lengthAdjust="spacingAndGlyphs">Ratings</text>
<path d="M1184 570.300H1440M1184 712.700H1440M1184 826.700H1440M1184 968.500H1440" stroke="#ddd"/>
<text x="1239.300" y="999" style="font-size:18px" textLength="100.700" lengthAdjust="spacingAndGlyphs">More Rules...</text>
<rect x="1239.300" y="1001.500" width="16" height="1.300" fill="#444"/>

<!-- Icon Sets highlighted item, on top of the submenu edge -->
<rect x="893.300" y="427.300" width="291.500" height="73.200" rx="3" fill="#cfcdcb" stroke="#000" stroke-width="4.500"/>
<use href="#gridM" x="918.500" y="449"/>
<rect x="926" y="449.500" width="25" height="31" fill="#fafafa"/>
<path d="M926 460H951M926 470H951M919 460H926M919 470H926M951 460H960M951 470H960" stroke="#6a6a6a"/>
<circle cx="930.700" cy="453.700" r="2.400" fill="#0f7cd4"/><circle cx="930.700" cy="464.300" r="2.400" fill="#e83b3b"/><circle cx="930.700" cy="474.500" r="2.400" fill="#0f7cd4"/>
<path d="M942 454H950M942 464.500H950M942 475H950" stroke="#777" stroke-width="1.300"/>
<text class="b" x="973" y="476" textLength="77" lengthAdjust="spacingAndGlyphs">Icon Sets</text>
<rect x="973" y="478.500" width="5" height="1.300" fill="#222"/>
<use href="#mc" x="1165.500" y="464"/>

<!-- directional -->
<g fill="#63a38d" stroke="#41806a">
<use href="#up" transform="translate(1199.500 459)"/><use href="#up" transform="translate(1199.500 515)"/><use href="#up" transform="translate(1199.500 543)"/>
</g>
<g fill="#e8bf7d" stroke="#a5813a">
<use href="#up" transform="translate(1224 459) rotate(90)"/>
<use href="#dg" transform="translate(1224 515)"/><use href="#dg" transform="translate(1248 515) rotate(90)"/>
<use href="#dg" transform="translate(1224 543)"/><use href="#up" transform="translate(1248 543) rotate(90)"/><use href="#dg" transform="translate(1272 543) rotate(90)"/>
</g>
<g fill="#d24e2e" stroke="#b03e22">
<use href="#up" transform="translate(1247.500 459) rotate(180)"/><use href="#up" transform="translate(1271.500 515) rotate(180)"/><use href="#up" transform="translate(1295.500 543) rotate(180)"/>
</g>
<path d="M1200 481.500 1209 491.500H1191Z" fill="#63a38d" stroke="#41806a"/>
<rect x="1215.500" y="483.500" width="17" height="6" fill="#e8bf7d" stroke="#a5813a"/>
<path d="M1248 492.700 1239 482.500H1257Z" fill="#d24e2e" stroke="#b03e22"/>
<g fill="#777" stroke="#666">
<use href="#up" transform="translate(1327.700 459)"/><use href="#up" transform="translate(1351.700 459) rotate(90)"/><use href="#up" transform="translate(1375.700 459) rotate(180)"/>
<use href="#up" transform="translate(1327.700 487)"/><use href="#dg" transform="translate(1351.700 487)"/><use href="#dg" transform="translate(1375.700 487) rotate(90)"/><use href="#up" transform="translate(1399.700 487) rotate(180)"/>
<use href="#up" transform="translate(1327.700 515)"/><use href="#dg" transform="translate(1351.700 515)"/><use href="#up" transform="translate(1375.700 515) rotate(90)"/><use href="#dg" transform="translate(1399.700 515) rotate(90)"/><use href="#up" transform="translate(1423.700 515) rotate(180)"/>
</g>

<!-- shapes -->
<g stroke-width="1">
<circle cx="1200" cy="629" r="8.600" fill="#63a38d" stroke="#41806a"/><circle cx="1224" cy="629" r="8.600" fill="#e8bf7d" stroke="#a5813a"/><circle cx="1248" cy="629" r="8.600" fill="#d24e2e" stroke="#b03e22"/>
<circle cx="1200" cy="657" r="8.600" fill="#63a38d" stroke="#41806a"/>
<path d="M1224 648 1233 665.500H1215Z" fill="#e8bf7d" stroke="#a5813a"/>
<path d="M1248 648 1257 657 1248 666 1239 657Z" fill="#d24e2e" stroke="#b03e22"/>
<circle cx="1200" cy="685" r="8.600" fill="#d24e2e" stroke="#b03e22"/><circle cx="1224" cy="685" r="8.600" fill="#eeada2" stroke="#a08a85"/><circle cx="1248" cy="685" r="8.600" fill="#aaa" stroke="#888"/><circle cx="1272" cy="685" r="8.600" fill="#4a4a4a" stroke="#444"/>
<rect x="1319.500" y="620.500" width="17" height="17" rx="2" fill="#4a4a4a"/><circle cx="1328" cy="629" r="6" fill="#63a38d"/>
<rect x="1343.500" y="620.500" width="17" height="17" rx="2" fill="#4a4a4a"/><circle cx="1352" cy="629" r="6" fill="#e8bf7d"/>
<rect x="1367.500" y="620.500" width="17" height="17" rx="2" fill="#4a4a4a"/><circle cx="1376" cy="629" r="6" fill="#d24e2e"/>
<circle cx="1328" cy="657" r="8.600" fill="#63a38d" stroke="#41806a"/><circle cx="1352" cy="657" r="8.600" fill="#e8bf7d" stroke="#a5813a"/><circle cx="1376" cy="657" r="8.600" fill="#d24e2e" stroke="#b03e22"/><circle cx="1400" cy="657" r="8.600" fill="#4a4a4a" stroke="#444"/>
</g>

<!-- indicators -->
<circle cx="1200" cy="771" r="8.600" fill="#63a38d" stroke="#41806a"/><path d="M1195.500 771 1199 775 1205 767" fill="none" stroke="#fff" stroke-width="2"/>
<circle cx="1224" cy="771" r="8.600" fill="#e8bf7d" stroke="#a5813a"/><path d="M1224 765V772M1224 775V777" stroke="#fff" stroke-width="2"/>
<circle cx="1248" cy="771" r="8.600" fill="#d24e2e" stroke="#b03e22"/><path d="M1244 767 1252 775M1252 767 1244 775" stroke="#fff" stroke-width="2"/>
<path d="M1319.500 771 1323 768 1326 772 1333 763 1337 766 1326.500 780Z" fill="#63a38d" stroke="#41806a"/>
<path d="M1349.500 762H1355L1353.500 775H1351Z" fill="#e8bf7d" stroke="#a5813a"/><circle cx="1352.300" cy="778" r="2" fill="#e8bf7d" stroke="#a5813a"/>
<path d="M1370 762.500 1376 768 1381.500 762.500 1384.500 766 1379.500 771.500 1384.500 777 1381.500 780.500 1376 775 1370.500 780.500 1367.500 777 1372.500 771.500 1367.500 766Z" fill="#d24e2e" stroke="#b03e22"/>
<path d="M1194 790V808M1218 790V808M1242 790V808" stroke="#777" stroke-width="2"/>
<path d="M1196 790.500 1207 796 1196 802Z" fill="#63a38d" stroke="#41806a"/><path d="M1220 790.500 1231 796 1220 802Z" fill="#e8bf7d" stroke="#a5813a"/><path d="M1244 790.500 1255 796 1244 802Z" fill="#d24e2e" stroke="#b03e22"/>

<!-- ratings -->
<use href="#star" x="1200" y="885.500" fill="#e8bf7d" stroke="#a5813a"/>
<use href="#star" x="1224" y="885.500" fill="#fff" stroke="#888"/>
<path d="M1224 876 1221.710 882.340 1214.970 882.560 1220.290 886.700 1218.420 893.190 1224 889.400Z" fill="#e8bf7d"/>
<use href="#star" x="1248" y="885.500" fill="#fff" stroke="#888"/>
<g stroke="#555" stroke-width="1.200">
<circle cx="1200" cy="913" r="8.500" fill="#4a4a4a"/>
<circle cx="1224" cy="913" r="8.500" fill="#4a4a4a"/><path d="M1224 913V904.500A8.500 8.500 0 0 0 1215.500 913Z" fill="#fff"/>
<circle cx="1248" cy="913" r="8.500" fill="#fff"/><path d="M1248 904.500A8.500 8.500 0 0 0 1248 921.500Z" fill="#4a4a4a"/>
<circle cx="1272" cy="913" r="8.500" fill="#fff"/><path d="M1272 913V904.500A8.500 8.500 0 0 1 1280.500 913Z" fill="#4a4a4a"/>
<circle cx="1296" cy="913" r="8.500" fill="#fff"/>
</g>
<!-- quads -->
<g stroke="#888" stroke-width="1">
<g transform="translate(1190.500 931)"><rect width="9" height="9" fill="#4477b2" stroke="#2b5a91"/><rect x="9" width="9" height="9" fill="#4477b2" stroke="#2b5a91"/><rect y="9" width="9" height="9" fill="#4477b2" stroke="#2b5a91"/><rect x="9" y="9" width="9" height="9" fill="#4477b2" stroke="#2b5a91"/></g>
<g transform="translate(1214.500 931)"><rect width="9" height="9" fill="#4477b2"/><rect x="9" width="9" height="9" fill="#b0b0b0"/><rect y="9" width="9" height="9" fill="#4477b2"/><rect x="9" y="9" width="9" height="9" fill="#4477b2"/></g>
<g transform="translate(1238.500 931)"><rect width="9" height="9" fill="#b0b0b0"/><rect x="9" width="9" height="9" fill="#b0b0b0"/><rect y="9" width="9" height="9" fill="#4477b2"/><rect x="9" y="9" width="9" height="9" fill="#4477b2"/></g>
<g transform="translate(1262.500 931)"><rect width="9" height="9" fill="#b0b0b0"/><rect x="9" width="9" height="9" fill="#b0b0b0"/><rect y="9" width="9" height="9" fill="#4477b2"/><rect x="9" y="9" width="9" height="9" fill="#b0b0b0"/></g>
<g transform="translate(1286.500 931)"><rect width="9" height="9" fill="#b0b0b0"/><rect x="9" width="9" height="9" fill="#b0b0b0"/><rect y="9" width="9" height="9" fill="#b0b0b0"/><rect x="9" y="9" width="9" height="9" fill="#b0b0b0"/></g>
</g>
<!-- signal bars -->
<g stroke="#666" stroke-width="1">
<g transform="translate(1319.500 876)"><rect y="11" width="4" height="7" fill="#4477b2"/><rect x="4.300" y="7" width="4" height="11" fill="#b0b0b0"/><rect x="8.600" y="3.500" width="4" height="14.500" fill="#b0b0b0"/><rect x="12.900" y="0" width="4" height="18" fill="#b0b0b0"/></g>
<g transform="translate(1343.500 876)"><rect y="11" width="4" height="7" fill="#4477b2"/><rect x="4.300" y="7" width="4" height="11" fill="#4477b2"/><rect x="8.600" y="3.500" width="4" height="14.500" fill="#b0b0b0"/><rect x="12.900" y="0" width="4" height="18" fill="#b0b0b0"/></g>
<g transform="translate(1367.500 876)"><rect y="11" width="4" height="7" fill="#4477b2"/><rect x="4.300" y="7" width="4" height="11" fill="#4477b2"/><rect x="8.600" y="3.500" width="4" height="14.500" fill="#4477b2"/><rect x="12.900" y="0" width="4" height="18" fill="#b0b0b0"/></g>
<g transform="translate(1391.500 876)"><rect y="11" width="4" height="7" fill="#4477b2"/><rect x="4.300" y="7" width="4" height="11" fill="#4477b2"/><rect x="8.600" y="3.500" width="4" height="14.500" fill="#4477b2"/><rect x="12.900" y="0" width="4" height="18" fill="#4477b2"/></g>
<g transform="translate(1319.500 904)"><rect y="11" width="4" height="7" fill="#b0b0b0"/><rect x="4.300" y="7" width="4" height="11" fill="#b0b0b0"/><rect x="8.600" y="3.500" width="4" height="14.500" fill="#b0b0b0"/><rect x="12.900" y="0" width="4" height="18" fill="#b0b0b0"/></g>
<g transform="translate(1343.500 904)"><rect y="11" width="4" height="7" fill="#4477b2"/><rect x="4.300" y="7" width="4" height="11" fill="#b0b0b0"/><rect x="8.600" y="3.500" width="4" height="14.500" fill="#b0b0b0"/><rect x="12.900" y="0" width="4" height="18" fill="#b0b0b0"/></g>
<g transform="translate(1367.500 904)"><rect y="11" width="4" height="7" fill="#4477b2"/><rect x="4.300" y="7" width="4" height="11" fill="#4477b2"/><rect x="8.600" y="3.500" width="4" height="14.500" fill="#b0b0b0"/><rect x="12.900" y="0" width="4" height="18" fill="#b0b0b0"/></g>
<g transform="translate(1391.500 904)"><rect y="11" width="4" height="7" fill="#4477b2"/><rect x="4.300" y="7" width="4" height="11" fill="#4477b2"/><rect x="8.600" y="3.500" width="4" height="14.500" fill="#4477b2"/><rect x="12.900" y="0" width="4" height="18" fill="#b0b0b0"/></g>
<g transform="translate(1415.500 904)"><rect y="11" width="4" height="7" fill="#4477b2"/><rect x="4.300" y="7" width="4" height="11" fill="#4477b2"/><rect x="8.600" y="3.500" width="4" height="14.500" fill="#4477b2"/><rect x="12.900" y="0" width="4" height="18" fill="#4477b2"/></g>
</g>
</svg>
</body></html>
